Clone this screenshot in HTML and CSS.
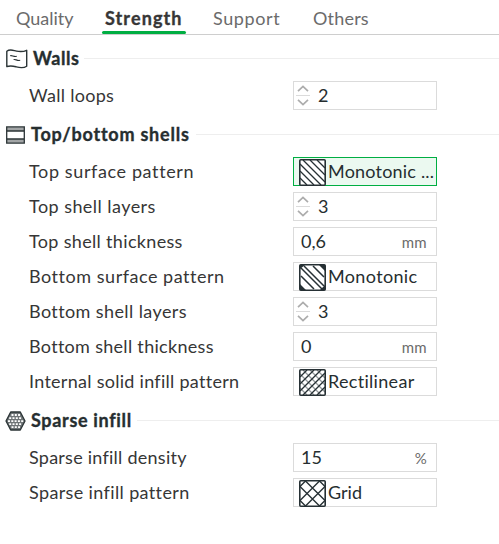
FILE: index.html
```html
<!DOCTYPE html>
<html lang="en">
<head>
<meta charset="utf-8">
<title>Strength settings</title>
<link rel="stylesheet" href="styles.css">
</head>
<body>
<svg class="defs" width="0" height="0">
  <symbol id="spin" viewBox="0 0 14 23">
    <path d="M2 7.2 7 2.4 12 7.2M2 15.8 7 20.6 12 15.8" fill="none" stroke="#acacac" stroke-width="1.7"/>
    <path d="M0 11.5H14" stroke="#dbdbdb"/>
  </symbol>
</svg>
<nav class="tabs">
  <a class="tab quality"><span>Quality</span></a>
  <a class="tab strength active"><span>Strength</span></a>
  <a class="tab support"><span>Support</span></a>
  <a class="tab others"><span>Others</span></a>
</nav>
<main>
  <section>
    <h2 class="walls"><svg width="22" height="20" viewBox="0 0 22 20" fill="none" stroke="#2b3436"><path d="M.8 2.2C4-.2 7 1.4 10.5 2.1S17 3 20.7 1.3V17.2C17 19.8 13 18.6 10 17.8S4 16.6.8 17.6Z" stroke-width="1.4" stroke-linejoin="round"/><path d="M4.2 6.8C6 6 7.5 8 10.7 7.4M7.6 10.6C9.5 9.8 11 12.1 14.2 11.3" stroke-width="1.1"/></svg><span>Walls</span></h2>
    <div class="row"><label class="l-loops">Wall loops</label><div class="field"><svg class="spin" width="14" height="23"><use href="#spin"/></svg><span>2</span></div></div>
  </section>
  <section>
    <h2 class="shells"><svg width="19" height="18" viewBox="0 0 19 18"><path d="M1 1H18V5H1ZM1 13H18V17H1Z" fill="#a2a5a6"/><path d="M.7.8H18.3V17.2H.7ZM1 5H18M1 13H18" fill="none" stroke="#2b3436" stroke-width="1.3"/></svg><span>Top/bottom shells</span></h2>
    <div class="row"><label class="l-tsp">Top surface pattern</label><div class="field selected"><svg class="pattern" width="27" height="27" viewBox="0 0 27 27"><rect x=".8" y=".8" width="25.4" height="25.4" rx="1" fill="#fff" stroke="#263034" stroke-width="1.6"/><path d="M1 19 8 26M1 12 15 26M1 5 22 26M4 1 26 23M11 1 26 16M18 1 26 9" stroke="#263034" stroke-width="1.3"/></svg><span class="v-mono">Monotonic ...</span></div></div>
    <div class="row"><label class="l-tsl">Top shell layers</label><div class="field"><svg class="spin" width="14" height="23"><use href="#spin"/></svg><span>3</span></div></div>
    <div class="row"><label class="l-tst">Top shell thickness</label><div class="field plain"><span>0,6</span><small>mm</small></div></div>
    <div class="row"><label class="l-bsp">Bottom surface pattern</label><div class="field"><svg class="pattern" width="27" height="27" viewBox="0 0 27 27"><rect x=".8" y=".8" width="25.4" height="25.4" rx="1" fill="#fff" stroke="#263034" stroke-width="1.6"/><path d="M2 12 15 25M2 4 23 25M5 2 25 22M14 2 25 13" stroke="#263034" stroke-width="1.5"/><path d="M1 20 7 26H1ZM1 1H6L1 5ZM20 1H26V7ZM26 21V26H21Z" fill="#263034"/></svg><span class="v-mono2">Monotonic</span></div></div>
    <div class="row"><label class="l-bsl">Bottom shell layers</label><div class="field"><svg class="spin" width="14" height="23"><use href="#spin"/></svg><span>3</span></div></div>
    <div class="row"><label class="l-bst">Bottom shell thickness</label><div class="field plain"><span>0</span><small>mm</small></div></div>
    <div class="row"><label class="l-int">Internal solid infill pattern</label><div class="field"><svg class="pattern" width="27" height="27" viewBox="0 0 27 27"><rect x=".8" y=".8" width="25.4" height="25.4" rx="1" fill="#fff"/><path d="M1 19 8 26M1 12 15 26M1 5 22 26M4 1 26 23M11 1 26 16M18 1 26 9" stroke="#92979a" stroke-width="1.3"/><path d="M1 8 8 1M1 15 15 1M1 22 22 1M4 26 26 4M11 26 26 11M18 26 26 18" stroke="#263034" stroke-width="1.3"/><rect x=".8" y=".8" width="25.4" height="25.4" rx="1" fill="none" stroke="#263034" stroke-width="1.6"/></svg><span class="v-rect">Rectilinear</span></div></div>
  </section>
  <section>
    <h2 class="sparse"><svg width="21" height="20" viewBox="0 0 21 20"><path d="M5.7 1H15.3L20 10 15.3 19H5.7L1 10Z" fill="#6f7577" stroke="#2b3436" stroke-width="1.3" stroke-linejoin="round"/><path d="M6.5 4H15M4.2 7.1H17M3 10.1H18.4M4.2 13.1H17M6.5 16.1H15" stroke="#fff" stroke-width="1.9" stroke-dasharray="2 1.3"/></svg><span>Sparse infill</span></h2>
    <div class="row"><label class="l-den">Sparse infill density</label><div class="field plain"><span>15</span><small class="pct">%</small></div></div>
    <div class="row"><label class="l-pat">Sparse infill pattern</label><div class="field"><svg class="pattern" width="27" height="27" viewBox="0 0 27 27"><rect x=".8" y=".8" width="25.4" height="25.4" rx="1" fill="#fff" stroke="#263034" stroke-width="1.6"/><path d="M1 6.5 20.5 26M6.5 1 26 20.5M20.5 1 1 20.5M26 6.5 6.5 26M1 20.5 6.5 26M20.5 1 26 6.5M1 6.5 6.5 1M20.5 26 26 20.5" stroke="#263034" stroke-width="1.4"/></svg><span class="v-grid">Grid</span></div></div>
  </section>
</main>
</body>
</html>
```
FILE: styles.css
```css
* { box-sizing: border-box; }
body { margin: 0; background: #fff; color: #363636; font: 18px/24px Lato, sans-serif; font-variant-ligatures: none; overflow: hidden; }
.defs { position: absolute; }
.tabs { display: flex; height: 35px; border-bottom: 1px solid #cecece; padding-left: 13px; gap: 24px; }
.tab { height: 34px; padding: 6px 3px 0; color: #6b6b6b; white-space: nowrap; }
.tab.active { position: relative; color: #363636; font-weight: 700; letter-spacing: 1.1px; -webkit-text-stroke: .35px; }
.tab.active::after { content: ""; position: absolute; left: 0; right: 0; bottom: 0; height: 3px; border-radius: 2px; background: #00ae42; }
.quality { width: 65px; }
.strength { width: 84px; }
.support { width: 76px; letter-spacing: .6px; }
.others { width: 70px; letter-spacing: .2px; }
section:first-child { margin-top: -1px; }
h2 { display: flex; align-items: center; height: 47px; margin: 0; padding: 2px 0 0 6px; gap: 6px; font-size: 18px; line-height: 24px; color: #262e30; white-space: nowrap; -webkit-text-stroke: .35px; }
h2 span { padding-bottom: 1px; }
h2::after { content: ""; flex: 1; height: 1px; background: #eee; }
.walls { gap: 5px; letter-spacing: .5px; }
.shells { letter-spacing: .78px; }
.sparse { padding-left: 5px; gap: 5px; letter-spacing: .67px; }
.row { display: flex; height: 29px; padding-left: 29px; margin-bottom: 6px; align-items: center; }
.row:last-child { margin-bottom: 0; }
label { width: 264px; white-space: nowrap; padding-bottom: 2px; }
.l-loops { letter-spacing: .3px; }
.l-tsp { letter-spacing: .62px; }
.l-tsl { letter-spacing: .45px; }
.l-tst { letter-spacing: .33px; }
.l-bsp { letter-spacing: .53px; }
.l-bsl { letter-spacing: .4px; }
.l-bst { letter-spacing: .3px; }
.l-int { letter-spacing: .28px; }
.l-den { letter-spacing: .25px; }
.l-pat { letter-spacing: .37px; }
.field { width: 144px; height: 29px; border: 1px solid #dbdbdb; display: flex; align-items: center; color: #262e30; white-space: nowrap; }
.field span { padding-bottom: 2px; }
.selected { background: #ebf9f0; border-color: #00ae42; }
.spin { margin: 0 8px 0 2px; }
.pattern { flex: none; margin: 1px 2px 0 5px; }
.v-mono { letter-spacing: .2px; }
.v-mono2 { letter-spacing: .35px; }
.v-rect { letter-spacing: .3px; }
.plain { padding: 0 9px 0 7px; justify-content: space-between; }
small { font-size: 15px; color: #6b6b6b; padding-bottom: 0; margin-right: 0; letter-spacing: .3px; }
```
